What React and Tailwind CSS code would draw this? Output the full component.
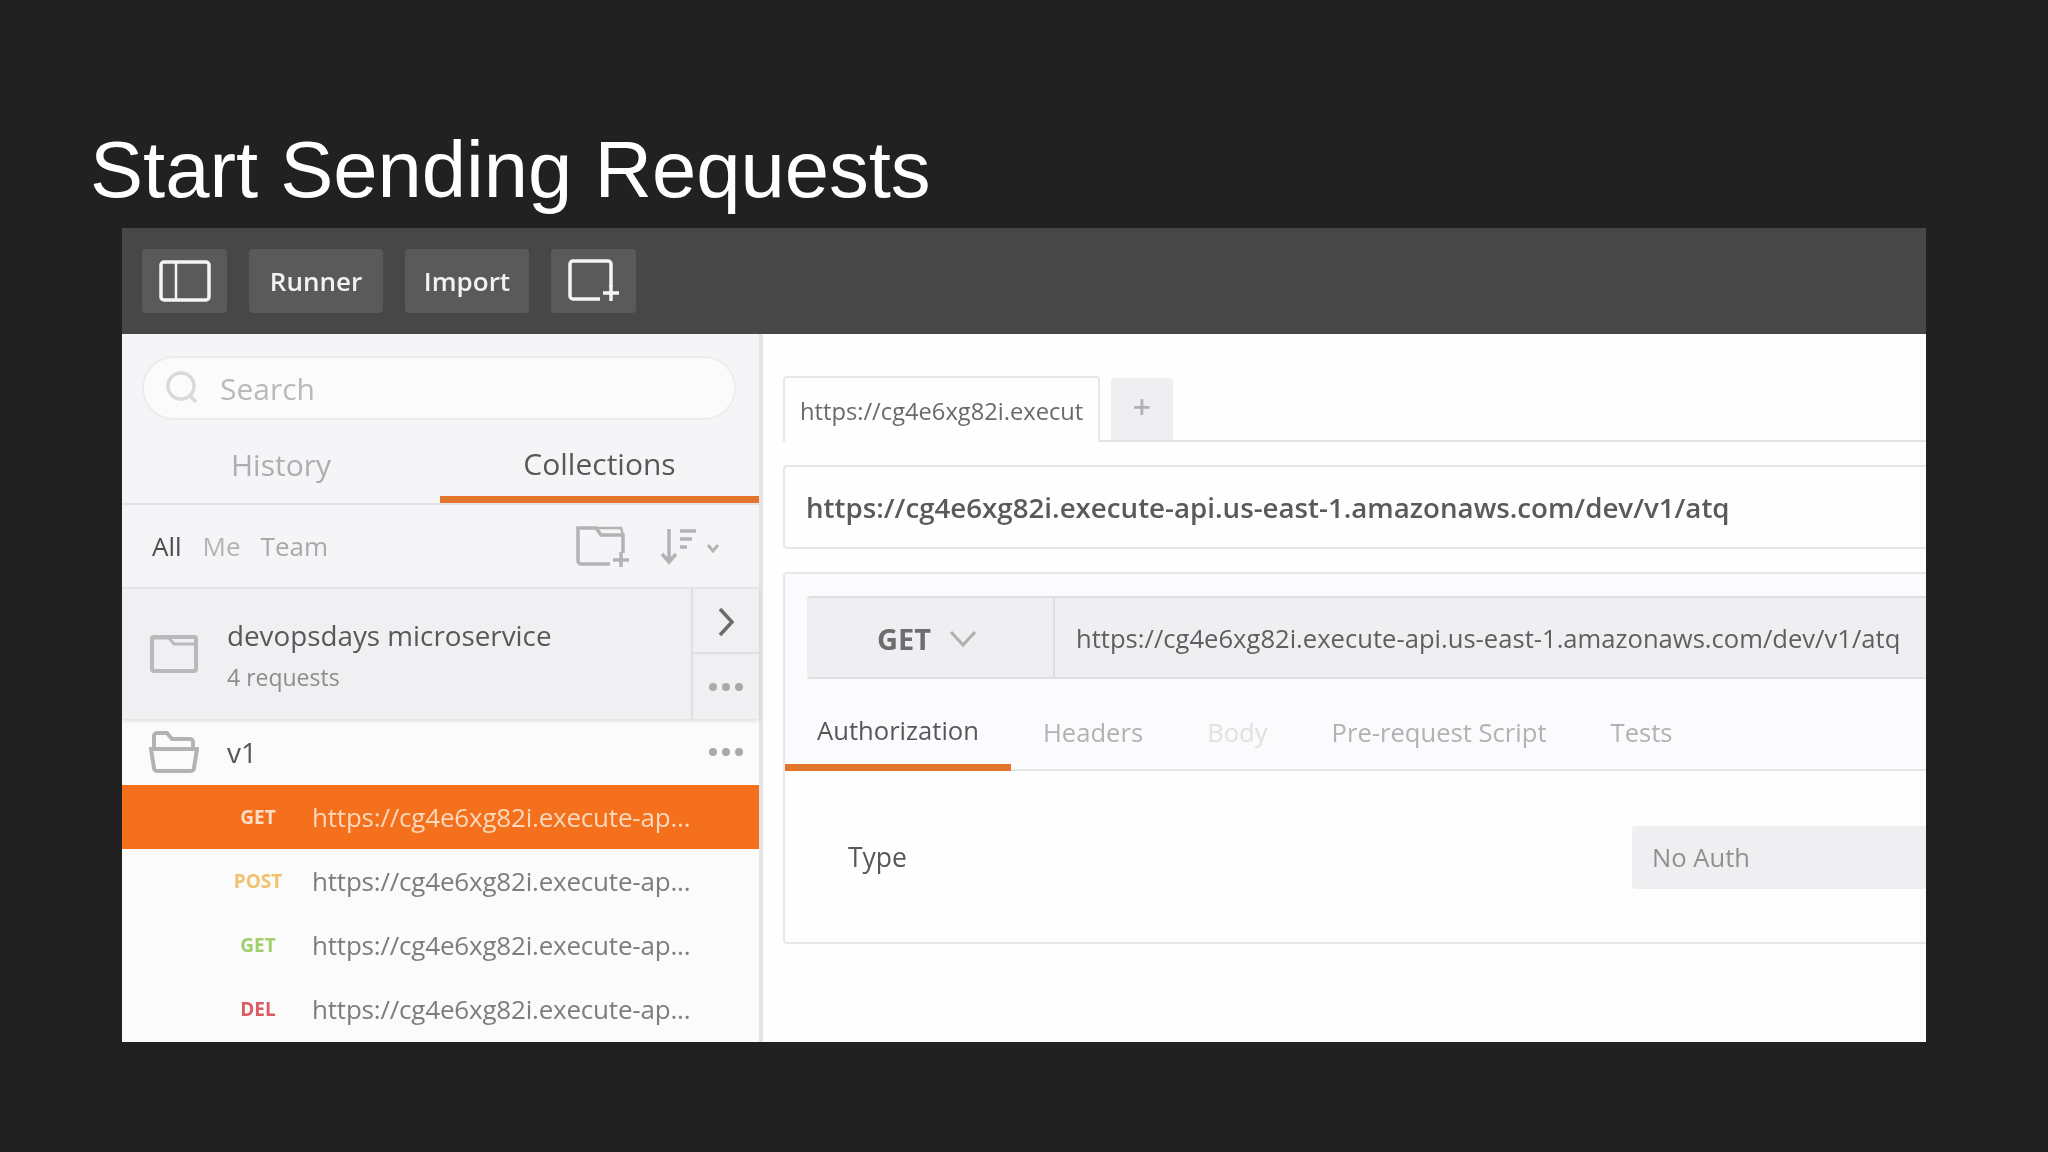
const OS = "font-['Open_Sans',sans-serif]";

function Req({ method, color, active }) {
  return (
    <div className={`flex h-[64px] items-center ${active ? "bg-[#f4701d]" : ""}`}>
      <div className={`w-[190px] pl-[82px] pt-[1px] text-center text-[19px] font-bold ${color}`}>{method}</div>
      <div className={`text-[26px] tracking-[-0.2px] ${active ? "text-[#fbd9bd]" : "text-[#7d7d7f]"}`}>
        https://cg4e6xg82i.execute-ap...
      </div>
    </div>
  );
}

function TopBtn({ className, children }) {
  return (
    <div className={`flex h-[64px] items-center justify-center rounded-[4px] bg-[#5a5a5a] text-[26px] font-semibold text-[#f2f2f2] ${className}`}>
      {children}
    </div>
  );
}

function Dots() {
  return (
    <svg width="36" height="10" viewBox="0 0 36 10" fill="#a9a9ab">
      <circle cx="5" cy="5" r="4" />
      <circle cx="18" cy="5" r="4" />
      <circle cx="31" cy="5" r="4" />
    </svg>
  );
}

export default function App() {
  return (
    <div className={`flex h-[1152px] w-[2048px] flex-col bg-[#212122] ${OS}`}>
      <div className="h-[228px] pl-[90px] pt-[122px] font-['Liberation_Sans',sans-serif] text-[79.6px] leading-[96px] text-white">
        Start Sending Requests
      </div>
      <div className="ml-[122px] flex h-[814px] w-[1804px] flex-col overflow-hidden blur-[0.7px]">
        <div className="flex h-[106px] shrink-0 items-center gap-[22px] bg-[#474747] pl-[20px] shadow-[0_2px_3px_rgba(0,0,0,0.3)]">
          <TopBtn className="w-[85px]">
            <svg width="52" height="42" viewBox="0 0 52 42" fill="none" stroke="#f5f5f5" strokeWidth="3.5">
              <rect x="2" y="2" width="48" height="38" rx="3" />
              <path d="M17 2v38" strokeWidth="2.5" />
            </svg>
          </TopBtn>
          <TopBtn className="w-[134px]">Runner</TopBtn>
          <TopBtn className="w-[124px]">Import</TopBtn>
          <TopBtn className="w-[85px]">
            <svg width="52" height="44" viewBox="0 0 52 44" fill="none" stroke="#f5f5f5" strokeWidth="3.5">
              <path d="M32 40H5a3 3 0 0 1-3-3V5a3 3 0 0 1 3-3h35a3 3 0 0 1 3 3v23" />
              <path d="M43 26v16M35 34h16" />
            </svg>
          </TopBtn>
        </div>

        <div className="flex min-h-0 flex-1">
          <div className="flex w-[641px] shrink-0 flex-col border-r-[4px] border-[#e4e4e6] bg-[#fbfbfc]">
            <div className="bg-[#f5f5f7] pl-[20px] pt-[22px]">
              <div className="flex h-[64px] w-[594px] items-center gap-[20px] rounded-full border-2 border-[#ececee] bg-[#fbfbfb] pl-[20px]">
                <svg width="36" height="36" viewBox="0 0 36 36" fill="none" stroke="#d9d9db" strokeWidth="3.5">
                  <circle cx="17" cy="16" r="13" />
                  <path d="M26 26l6 6" />
                </svg>
                <span className="text-[30px] text-[#b9b9bb]">Search</span>
              </div>
            </div>
            <div className="flex h-[85px] shrink-0 border-b-2 border-[#e3e3e5] bg-[#f5f5f7]">
              <div className="flex w-[318px] items-center justify-center pt-[6px] text-[30px] text-[#aeaeb0]">History</div>
              <div className="relative flex flex-1 items-center justify-center border-b-[7px] border-[#e2742c] pt-[10px] text-[30px] text-[#58585a]">Collections</div>
            </div>
            <div className="flex h-[84px] shrink-0 items-center border-b-2 border-[#e6e6e8] bg-[#f5f5f7] pl-[30px] text-[26px]">
              <span className="text-[#4d4d4f]">All</span>
              <span className="ml-[21px] text-[#b4b4b6]">Me</span>
              <span className="ml-[20px] text-[#a9a9ab]">Team</span>
              <svg className="ml-[248px]" width="56" height="44" viewBox="0 0 56 44" fill="none" stroke="#b3b3b5" strokeWidth="3.5">
                <path d="M34 40H5a3 3 0 0 1-3-3V4h18l5 7h22v18" />
                <path d="M20 4h25l2 7" strokeWidth="2.5" />
                <path d="M45 28v15M37 36h16" />
              </svg>
              <svg className="ml-[28px]" width="62" height="38" viewBox="0 0 62 38" fill="none" stroke="#b3b3b5" strokeWidth="3.5">
                <path d="M9 2v32M2 27l7 8 7-8" />
                <path d="M20 4h16M20 12h12M20 20h7" />
                <path d="M48 18l5 6 5-6" strokeWidth="3" />
              </svg>
            </div>
            <div className="flex h-[130px] shrink-0 items-stretch bg-[#f0f0f2] shadow-[0_2px_4px_rgba(0,0,0,0.12)]">
              <div className="flex w-[571px] items-center border-r-2 border-[#dfdfe1] pl-[28px]">
                <svg width="48" height="38" viewBox="0 0 48 38" fill="none" stroke="#b9b9bb" strokeWidth="4">
                  <path d="M2 4a2 2 0 0 1 2-2h40a2 2 0 0 1 2 2v30a2 2 0 0 1-2 2H4a2 2 0 0 1-2-2z" />
                  <path d="M2 3l17 0 5 6h22" strokeWidth="3" />
                </svg>
                <div className="ml-[29px] flex flex-col">
                  <span className="text-[27.8px] leading-[38px] text-[#58585a]">devopsdays microservice</span>
                  <span className="mt-[7px] text-[23px] leading-[32px] text-[#8c8c8e]">4 requests</span>
                </div>
              </div>
              <div className="flex flex-1 flex-col">
                <div className="flex h-[65px] items-center justify-center border-b-2 border-[#dfdfe1] pt-[3px]">
                  <svg width="18" height="30" viewBox="0 0 18 30" fill="none" stroke="#6b6b6d" strokeWidth="3.5">
                    <path d="M3 2l12 13L3 28" />
                  </svg>
                </div>
                <div className="flex flex-1 items-center justify-center">
                  <Dots />
                </div>
              </div>
            </div>
            <div className="flex h-[66px] shrink-0 items-center pl-[27px] pr-[15px]">
              <svg width="50" height="42" viewBox="0 0 50 42" fill="none" stroke="#b3b3b5" strokeWidth="4">
                <path d="M5 18V5a3 3 0 0 1 3-3h10l5 6h18a3 3 0 0 1 3 3v7" />
                <path d="M2 18h46l-3 19a3 3 0 0 1-3 3H8a3 3 0 0 1-3-3z" />
              </svg>
              <span className="ml-[28px] flex-1 text-[28px] text-[#58585a]">v1</span>
              <Dots />
            </div>
            <Req method="GET" color="text-[#fbdcc4]" active />
            <Req method="POST" color="text-[#f0c16e]" />
            <Req method="GET" color="text-[#a0cf6c]" />
            <Req method="DEL" color="text-[#dc5c63]" />
          </div>

          <div className="min-w-0 flex-1 bg-[#fefefe] pl-[20px] pt-[44px]">
            <div className="flex h-[64px] items-end border-b-2 border-[#e3e3e5]">
              <div className="-mb-[2px] flex h-[66px] w-[317px] items-center overflow-hidden whitespace-nowrap rounded-t-[4px] border-2 border-b-0 border-[#e7e7e9] bg-[#fefefe] pl-[15px] pr-[14px] pt-[3px]">
                <span className="block w-full overflow-hidden text-[23.7px] text-[#6a6a6c]">https://cg4e6xg82i.execute-api</span>
              </div>
              <div className="ml-[11px] flex h-[62px] w-[62px] items-center justify-center rounded-t-[4px] bg-[#efeff1] pb-[4px] text-[32px] font-semibold text-[#b1b1b3]">+</div>
            </div>
            <div className="mt-[23px] flex h-[84px] items-center rounded-l-[4px] border-2 border-r-0 border-[#e7e7e9] pl-[21px] pt-[2px] text-[27.7px] font-semibold text-[#5a5a5c]">
              https://cg4e6xg82i.execute-api.us-east-1.amazonaws.com/dev/v1/atq
            </div>
            <div className="mt-[23px] h-[372px] rounded-l-[4px] border-2 border-r-0 border-[#e7e7e9]">
              <div className="bg-[#fbfbfd] pl-[22px] pt-[22px]">
                <div className="flex h-[83px] rounded-l-[4px] border-b-2 border-t-2 border-[#dfdfe1] bg-[#efeff1]">
                  <div className="flex w-[248px] items-center justify-center gap-[18px] border-r-2 border-[#dedee0] pr-[6px] pt-[2px] text-[29px] font-bold text-[#6e6e70]">
                    GET
                    <svg width="28" height="18" viewBox="0 0 28 18" fill="none" stroke="#b0b0b2" strokeWidth="3">
                      <path d="M2 2l12 13L26 2" />
                    </svg>
                  </div>
                  <div className="flex flex-1 items-center whitespace-nowrap pl-[21px] pt-[3px] text-[25.6px] text-[#5f5f61]">
                    https://cg4e6xg82i.execute-api.us-east-1.amazonaws.com/dev/v1/atq
                  </div>
                </div>
                <div className="flex h-[92px] items-center border-b-2 border-[#e5e5e7] pt-[18px] text-[25.6px]">
                  <div className="-mb-[2px] -ml-[22px] -mt-[18px] flex h-[92px] w-[226px] items-center justify-center border-b-[7px] border-[#e2742c] pt-[20px] text-[#57575a]">Authorization</div>
                  <span className="ml-[32px] text-[#b2b2b4]">Headers</span>
                  <span className="ml-[64px] text-[#e1e1e3]">Body</span>
                  <span className="ml-[64px] text-[#b2b2b4]">Pre-request Script</span>
                  <span className="ml-[64px] text-[#b2b2b4]">Tests</span>
                </div>
              </div>
              <div className="flex items-center pl-[63px] pt-[55px]">
                <span className="w-[784px] text-[26.5px] text-[#58585a]">Type</span>
                <div className="flex h-[63px] flex-1 items-center rounded-l-[4px] bg-[#efeff1] pl-[20px] pt-[2px] text-[25.6px] text-[#909092]">No Auth</div>
              </div>
            </div>
          </div>
        </div>
      </div>
    </div>
  );
}
